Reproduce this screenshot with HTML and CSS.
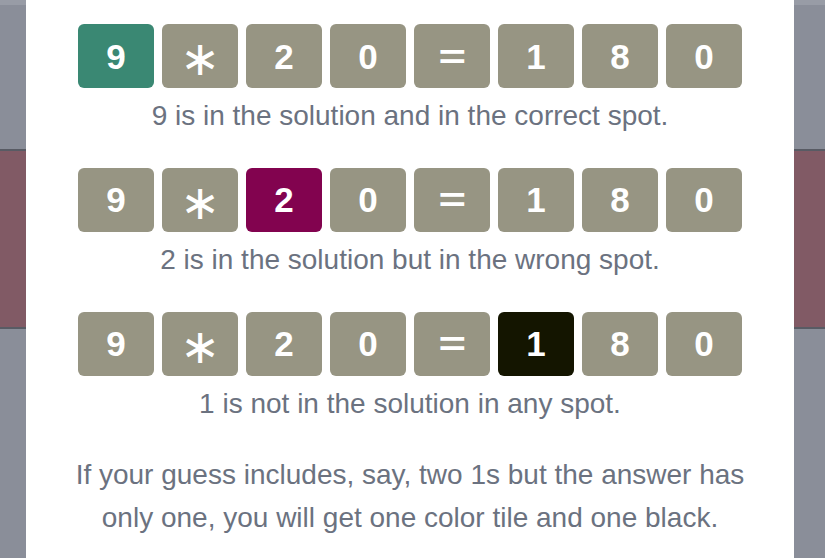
FILE: index.html
```html
<!DOCTYPE html>
<html lang="en">
<head>
<meta charset="utf-8">
<title>How to play</title>
<link rel="stylesheet" href="styles.css">
</head>
<body>
<div class="page">
  <div class="side side-left"></div>
  <main class="modal">
    <section class="example">
      <div class="tiles">
        <span class="tile correct">9</span>
        <span class="tile"><span class="op">∗</span></span>
        <span class="tile">2</span>
        <span class="tile">0</span>
        <span class="tile"><span class="eq">=</span></span>
        <span class="tile">1</span>
        <span class="tile">8</span>
        <span class="tile">0</span>
      </div>
      <p class="caption">9 is in the solution and in the correct spot.</p>
    </section>
    <section class="example">
      <div class="tiles">
        <span class="tile">9</span>
        <span class="tile"><span class="op">∗</span></span>
        <span class="tile present">2</span>
        <span class="tile">0</span>
        <span class="tile"><span class="eq">=</span></span>
        <span class="tile">1</span>
        <span class="tile">8</span>
        <span class="tile">0</span>
      </div>
      <p class="caption">2 is in the solution but in the wrong spot.</p>
    </section>
    <section class="example">
      <div class="tiles">
        <span class="tile">9</span>
        <span class="tile"><span class="op">∗</span></span>
        <span class="tile">2</span>
        <span class="tile">0</span>
        <span class="tile"><span class="eq">=</span></span>
        <span class="tile absent">1</span>
        <span class="tile">8</span>
        <span class="tile">0</span>
      </div>
      <p class="caption">1 is not in the solution in any spot.</p>
    </section>
    <p class="note">If your guess includes, say, two 1s but the answer has only one, you will get one color tile and one black.</p>
  </main>
  <div class="side side-right"></div>
</div>
</body>
</html>
```

FILE: styles.css
```css
* { box-sizing: border-box; }
html, body {
  margin: 0;
  padding: 0;
  height: 100%;
}
body {
  font-family: "Liberation Sans", Arial, sans-serif;
  overflow: hidden;
}
.page {
  display: flex;
  height: 558px;
  background: linear-gradient(
    to bottom,
    #989ca6 0, #989ca6 5px,
    #8a8e99 5px, #8a8e99 149px,
    #585b64 149px, #585b64 151px,
    #815a65 151px, #815a65 327px,
    #585b64 327px, #585b64 329px,
    #8a8e99 329px, #8a8e99 100%
  );
}
.side-left { width: 26px; flex: none; }
.side-right { flex: 1; }
.modal {
  width: 768px;
  flex: none;
  background: #ffffff;
  padding-top: 24px;
  text-align: center;
}
.example + .example { margin-top: 30.6px; }
.tiles {
  display: flex;
  justify-content: center;
  gap: 8px;
}
.tile {
  width: 76px;
  height: 64px;
  border-radius: 6px;
  background: #979583;
  color: #ffffff;
  font-weight: 700;
  font-size: 35px;
  line-height: 1;
  display: flex;
  align-items: center;
  justify-content: center;
}
.tile.correct { background: #3a8873; }
.tile.present { background: #82034f; }
.tile.absent { background: #141500; }
.op {
  font-family: "DejaVu Sans", sans-serif;
  font-weight: 400;
  font-size: 48px;
  line-height: 1;
  transform: translateY(2px);
}
.eq {
  display: inline-block;
  transform: scaleX(1.35);
}
.caption, .note {
  margin: 0;
  color: #6b7280;
  font-size: 28px;
  line-height: 42.8px;
}
.caption { margin-top: 6.6px; }
.note {
  margin: 28.8px auto 0;
  padding: 0 30px;
}
```
